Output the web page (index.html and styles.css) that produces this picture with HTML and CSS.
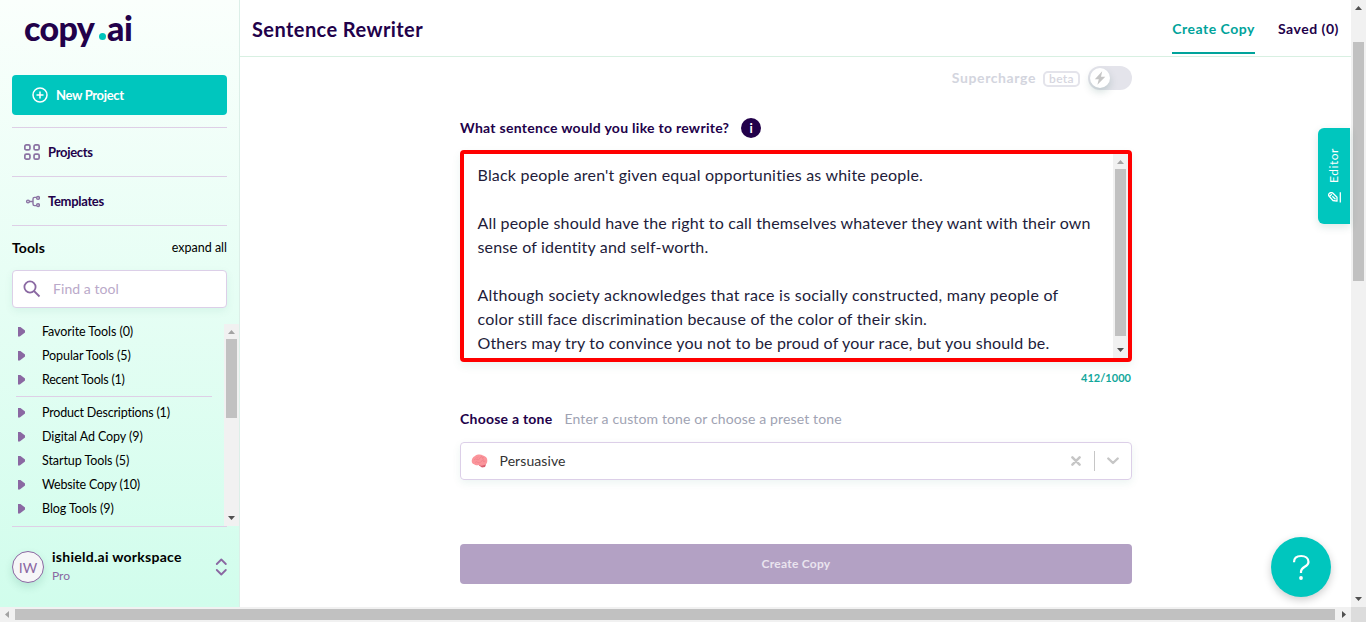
FILE: index.html
```html
<!DOCTYPE html>
<html lang="en">
<head>
<meta charset="utf-8">
<title>Sentence Rewriter</title>
<link rel="stylesheet" href="styles.css">
</head>
<body>
<div class="app">
  <div class="viewport">
    <aside class="sidebar">
      <div class="logo"><span class="logo-copy">copy</span><i class="logo-dot"></i><span class="logo-ai">ai</span></div>
      <button class="new-project">
        <svg width="16" height="16" viewBox="0 0 16 16" fill="none" stroke="#fff" stroke-width="1.5"><circle cx="8" cy="8" r="7"/><path d="M8 4.500v7M4.500 8h7"/></svg>
        <span>New Project</span>
      </button>
      <a class="nav-item">
        <svg width="16" height="16" viewBox="0 0 16 16" fill="none" stroke="#8a72a2" stroke-width="1.700"><rect x=".85" y=".85" width="5.100" height="5.100" rx="1.500"/><rect x="10.050" y=".85" width="5.100" height="5.100" rx="1.500"/><rect x=".85" y="10.050" width="5.100" height="5.100" rx="1.500"/><rect x="10.050" y="10.050" width="5.100" height="5.100" rx="1.500"/></svg>
        <span>Projects</span>
      </a>
      <a class="nav-item">
        <svg width="16" height="16" viewBox="0 0 16 16" fill="none" stroke="#8a72a2" stroke-width="1.400"><circle cx="4" cy="8.500" r="1.400"/><circle cx="14" cy="4.900" r="1.400"/><circle cx="14" cy="12.100" r="1.400"/><path d="M5.500 8.500H9M12.500 4.400h-2Q9 4.400 9 5.900v5.200q0 1.500 1.500 1.500h2"/></svg>
        <span>Templates</span>
      </a>
      <div class="tools-head"><b>Tools</b><span>expand all</span></div>
      <div class="search">
        <svg width="18" height="18" viewBox="0 0 18 18" fill="none" stroke="#8a68a2" stroke-width="1.800"><circle cx="7" cy="7" r="5.600"/><path d="M11 11l5.500 5.500"/></svg>
        <span>Find a tool</span>
      </div>
      <div class="tool-panel">
        <ul class="tool-list">
          <li>Favorite Tools (0)</li>
          <li>Popular Tools (5)</li>
          <li class="tight">Recent Tools (1)</li>
          <li class="rule"></li>
          <li class="wide">Product Descriptions (1)</li>
          <li>Digital Ad Copy (9)</li>
          <li>Startup Tools (5)</li>
          <li class="wide">Website Copy (10)</li>
          <li>Blog Tools (9)</li>
        </ul>
        <div class="scroll-v scroll-tools"><i class="up off"></i><div class="thumb"></div><i class="down"></i></div>
      </div>
      <div class="workspace">
        <div class="avatar">IW</div>
        <div class="workspace-text"><b>ishield.ai workspace</b><span>Pro</span></div>
        <svg width="12" height="18" viewBox="0 0 12 18" fill="none" stroke="#8a68a2" stroke-width="1.800" stroke-linecap="round" stroke-linejoin="round"><path d="M1.800 6L6.300 1.500 10.800 6M1.800 12L6.300 16.500 10.800 12"/></svg>
      </div>
    </aside>
    <main class="main">
      <header class="topbar">
        <h1>Sentence Rewriter</h1>
        <nav><a class="tab active">Create Copy</a><a class="tab">Saved (0)</a></nav>
      </header>
      <section class="form">
        <div class="supercharge">
          <span class="supercharge-label">Supercharge</span>
          <span class="beta">beta</span>
          <span class="toggle"><span class="knob"><svg width="12" height="14" viewBox="0 0 12 14"><path d="M8.200.2L.8 8.300h4L3.400 13.800 11.300 5.700H7z" fill="#c6c6c6"/></svg></span></span>
        </div>
        <div class="question"><span>What sentence would you like to rewrite?</span><i class="info">i</i></div>
        <div class="textarea">
          <div class="text">
            <p>Black people aren't given equal opportunities as white people.</p>
            <p class="l2">All people should have the right to call themselves whatever they want with their own</p>
            <p class="l3">sense of identity and self-worth.</p>
            <p class="l4">Although society acknowledges that race is socially constructed, many people of</p>
            <p class="l5">color still face discrimination because of the color of their skin.</p>
            <p class="l6">Others may try to convince you not to be proud of your race, but you should be.</p>
          </div>
          <div class="scroll-v scroll-text"><i class="up off"></i><div class="thumb"></div><i class="down"></i></div>
        </div>
        <div class="count">412/1000</div>
        <div class="tone-label"><b>Choose a tone</b><span>Enter a custom tone or choose a preset tone</span></div>
        <div class="select">
          <svg class="brain" width="17" height="14" viewBox="0 0 17 14"><path d="M8 9q4-1 7 1.500L14 13l-3 .5L8 11.500z" fill="#d95f70"/><path d="M.8 8C.3 5.500 1.600 3.200 4 2 6 .3 10 .2 12 1.500c2.500.5 4.500 2.500 4.300 5C16.500 9 15 11 12.500 11.300c-1.500.7-3.500.5-4.500-.3-2 .8-4 .2-4.800-.8C2 10 1 9.200.8 8z" fill="#fb959b"/><path d="M3 6q1.500-2 3-.5T9 4t3 1 2.500 2M4 8.500q1.500-1.500 3 0t3-1 3 .7M5.500 3.500q1 1 2-.5M10.500 2.500q1 1.300 2.500.8" fill="none" stroke="#ee7f8a" stroke-width=".7"/></svg>
          <span>Persuasive</span>
          <svg class="clear" width="10" height="10" viewBox="0 0 10 10" stroke="#c6c6c6" stroke-width="2.500" stroke-linecap="round"><path d="M1.400 1.400l7.200 7.200M8.600 1.400L1.400 8.600"/></svg>
          <i class="sep"></i>
          <svg class="chevron" width="14" height="8" viewBox="0 0 14 8" fill="none" stroke="#c6c6c6" stroke-width="2.400" stroke-linecap="round" stroke-linejoin="round"><path d="M2.300 1.500L7 6l4.700-4.500"/></svg>
        </div>
        <button class="create">Create Copy</button>
      </section>
      <div class="editor-tab">
        <svg width="13" height="11" viewBox="0 0 13 11" fill="none" stroke="#fff" stroke-width="1.300" stroke-linejoin="round"><path d="M1.200 4.300Q-.2 2.500 1.500 1.200T4.700 1L9 5.200V9.200L5 8.500zM3.800 2.200L1.800 4.100M4.300 4.200l3.200 3M12.300.3v10.200"/></svg>
        <span>Editor</span>
      </div>
      <div class="help"><svg width="20" height="28" viewBox="0 0 20 28" fill="none" stroke="#fff" stroke-width="2.200"><path d="M3 9.200C3 5 6 3 10.200 3S17.500 5.200 17.500 9c0 5-7.500 4.600-7.500 9.500v1.500"/><circle cx="10" cy="25" r="1.900" fill="#fff" stroke="none"/></svg></div>
    </main>
    <div class="scroll-v scroll-page"><i class="up"></i><div class="thumb"></div><i class="down"></i></div>
  </div>
  <div class="scroll-h"><i class="left"></i><div class="thumb"></div><i class="right"></i><div class="corner"></div></div>
</div>
</body>
</html>
```
FILE: styles.css
```css
* { box-sizing: border-box; }
body { margin: 0; background: #fff; color: #000; font-family: Lato, "Liberation Sans", sans-serif; overflow: hidden; }
button { font: inherit; border: 0; padding: 0; }
svg, .info, .logo-dot { flex: none; display: block; }
.app { width: 1366px; height: 622px; display: flex; flex-direction: column; }
.viewport { height: 607px; display: flex; }

/* Sidebar */
.sidebar { width: 240px; height: 607px; padding-left: 12px; border-right: 1px solid #dcefe8; background: linear-gradient(180deg, #fafffc 0%, #d1fdec 100%); display: flex; flex-direction: column; flex: none; }
.logo { height: 75px; padding: 7px 0 0 12px; display: flex; color: #22014a; font-size: 34px; font-weight: 900; line-height: 41px; }
.logo-copy { width: 74px; letter-spacing: -.6px; }
.logo-dot { width: 7px; height: 7px; border-radius: 50%; background: #00c4bb; margin: 26px 1px 0 1px; }
.logo-ai { letter-spacing: -.5px; }
.new-project { width: 215px; height: 40px; margin-bottom: 12px; padding-left: 20px; border-radius: 4px; background: #00c6be; color: #fff; display: flex; align-items: center; gap: 8px; font-size: 13px; font-weight: 700; letter-spacing: -.33px; text-align: left; flex: none; }
.nav-item { width: 215px; height: 49px; padding-left: 12px; border-top: 1px solid #decfe6; display: flex; align-items: center; gap: 8px; color: #22014a; font-size: 13px; font-weight: 700; letter-spacing: -.3px; flex: none; }
.nav-item span { padding-bottom: 1px; }
.tools-head { width: 215px; height: 45px; padding-bottom: 2px; border-top: 1px solid #decfe6; display: flex; align-items: center; justify-content: space-between; font-size: 12.5px; flex: none; }
.tools-head b { font-size: 14px; letter-spacing: .1px; }
.search { width: 215px; height: 38px; padding-left: 10px; border: 1px solid #dccfe8; border-radius: 4px; background: #fff; box-shadow: 0 3px 8px rgba(0, 110, 90, .07); display: flex; align-items: center; gap: 12px; color: #baa9c9; font-size: 14px; letter-spacing: .07px; flex: none; }
.search span { padding-bottom: 2px; }
.tool-panel { height: 218px; padding-top: 12px; display: flex; flex: none; }
.tool-list { width: 212px; height: 206px; margin: 0; padding: 0; list-style: none; font-size: 12.5px; letter-spacing: -.08px; }
.tool-list li { height: 24px; padding: 0 0 1px 6px; display: flex; align-items: center; white-space: nowrap; }
.tool-list li::before { content: ""; width: 7px; height: 10px; margin-right: 17px; background: #8a68a2; clip-path: polygon(0 0, 25% 0, 100% 40%, 100% 60%, 25% 100%, 0 100%); }
.tool-list .tight { letter-spacing: -.22px; }
.tool-list .wide { letter-spacing: -.19px; }
.tool-list .rule { height: 1px; margin: 4px 12px 4px 4px; padding: 0; background: #decfe6; }
.tool-list .rule::before { display: none; }
.workspace { width: 215px; height: 81px; border-top: 1px solid #decfe6; display: flex; align-items: center; flex: none; }
.avatar { width: 32px; height: 32px; border: 1px solid #8a68a2; border-radius: 50%; background: #f6f6f8; box-shadow: 0 4px 8px rgba(0, 90, 70, .14); color: #8a68a2; font-size: 14px; line-height: 31px; text-align: center; }
.workspace-text { flex: 1; padding: 0 0 1px 8px; display: flex; flex-direction: column; gap: 3px; }
.workspace-text b { font-size: 14px; font-weight: 700; line-height: 16px; letter-spacing: .27px; }
.workspace-text span { color: #8a68a2; font-size: 12px; line-height: 16px; }

/* Scroll bars */
.scroll-v { width: 15px; background: #f1f1f1; display: flex; flex-direction: column; align-items: center; justify-content: space-between; flex: none; }
.thumb { background: #c1c1c1; }
.scroll-v .thumb { width: 11px; }
.up, .down { width: 7px; height: 4px; background: #505050; flex: none; }
.up { clip-path: polygon(50% 0, 100% 100%, 0 100%); }
.down { clip-path: polygon(0 0, 100% 0, 50% 100%); }
.off { background: #a3a3a3; }
.scroll-tools { height: 202px; margin-top: 4px; padding: 6px 0; justify-content: flex-start; }
.scroll-tools .thumb { height: 79px; margin: 5px 0 auto; }
.scroll-text { height: 204px; padding: 6px 0; }
.scroll-text .thumb { height: 167px; margin: 5px 0 auto; }
.scroll-page { height: 607px; padding: 6px 0; }
.scroll-page .thumb { height: 239px; margin: 32px 0 auto; }
.scroll-h { height: 15px; background: #f1f1f1; display: flex; align-items: center; }
.scroll-h .thumb { width: 1320px; height: 11px; }
.left, .right { width: 4px; height: 7px; }
.left { margin: 0 6px 0 5px; background: #a3a3a3; clip-path: polygon(100% 0, 100% 100%, 0 50%); }
.right { margin: 0 5px 0 7px; background: #505050; clip-path: polygon(0 0, 100% 50%, 0 100%); }
.corner { width: 15px; height: 15px; background: #dcdcdc; }

/* Main column */
.main { position: relative; width: 1111px; height: 607px; flex: none; }
.topbar { height: 57px; padding: 0 12px; border-bottom: 1px solid #d8f0e2; display: flex; align-items: flex-start; justify-content: space-between; color: #22014a; }
.topbar h1 { margin: 0; font-size: 20px; line-height: 58px; letter-spacing: .42px; }
.topbar nav { display: flex; gap: 23px; }
.tab { height: 54px; font-size: 14px; font-weight: 700; line-height: 57px; letter-spacing: .52px; white-space: nowrap; }
.tab.active { color: #00a39b; border-bottom: 2px solid #00a39b; }
.form { width: 672px; margin-left: 220px; padding-top: 8px; display: flex; flex-direction: column; }
.supercharge { height: 26px; display: flex; align-items: center; justify-content: flex-end; gap: 8px; }
.supercharge-label { padding-bottom: 1px; color: #d3d5de; font-size: 14px; font-weight: 700; letter-spacing: .6px; margin-right: -1px; }
.beta { width: 37px; height: 16px; margin-top: 2px; border: 2px solid #e4e4eb; border-radius: 5px; color: #d6d6e0; font-size: 12px; font-weight: 600; line-height: 11px; letter-spacing: .37px; text-align: center; }
.toggle { width: 44px; height: 24px; padding: 2px; border-radius: 12px; background: #e4e4eb; }
.knob { width: 20px; height: 20px; border-radius: 50%; background: #fff; box-shadow: 0 4px 8px rgba(0, 70, 60, .18); display: flex; align-items: center; justify-content: center; }
.question { height: 20px; margin-top: 27px; display: flex; align-items: center; gap: 12px; color: #22014a; font-size: 14px; font-weight: 700; letter-spacing: .28px; }
.question span { padding-bottom: 2px; }
.info { width: 20px; height: 20px; border-radius: 50%; background: #22014a; color: #fff; font-size: 13px; font-style: normal; line-height: 20px; text-align: center; }
.textarea { height: 212px; margin-top: 12px; border: 4px solid #f00; border-radius: 4px; background: #fff; box-shadow: 0 4px 10px rgba(0, 110, 90, .08); display: flex; justify-content: space-between; }
.text { padding: 9px 0 0 13.500px; color: #221c3a; font-size: 16px; line-height: 24px; letter-spacing: .2px; white-space: nowrap; }
.text p { margin: 0; }
.text .l2 { margin-top: 24px; letter-spacing: .16px; }
.text .l3 { letter-spacing: .16px; }
.text .l4 { margin-top: 24px; letter-spacing: .26px; }
.text .l5 { letter-spacing: .21px; }
.text .l6 { letter-spacing: .18px; }
.count { height: 16px; margin-top: 8px; padding-right: 1px; color: #12a79b; font-size: 11px; font-weight: 700; line-height: 16px; letter-spacing: .03px; text-align: right; }
.tone-label { height: 20px; margin-top: 24px; padding-bottom: 3px; display: flex; align-items: center; gap: 12px; font-size: 14px; }
.tone-label b { color: #22014a; letter-spacing: .24px; }
.tone-label span { color: #a0a3b3; letter-spacing: .13px; }
.select { height: 38px; margin-top: 12px; padding: 0 11px 0 10px; border: 1px solid #dccfe8; border-radius: 4px; box-shadow: 0 3px 9px rgba(0, 110, 90, .08); display: flex; align-items: center; color: #333; font-size: 14px; letter-spacing: .09px; }
.select span { padding-bottom: 2px; }
.brain { margin-right: 11.500px; }
.clear { margin-left: auto; }
.sep { width: 1px; height: 20px; margin: 0 11px 0 13px; background: #c6c6c6; }
.create { height: 40px; margin-top: 64px; padding-bottom: 2px; border-radius: 4px; background: #b3a1c4; color: #eae4ef; font-size: 12px; font-weight: 700; letter-spacing: .25px; }

/* Floating controls */
.editor-tab { position: absolute; top: 128px; right: 1px; width: 32px; height: 96px; padding-bottom: 21px; border-radius: 6px 0 0 6px; background: #00c6be; box-shadow: 0 3px 8px rgba(0, 90, 80, .14); display: flex; flex-direction: column-reverse; align-items: center; gap: 9px; color: #fff; font-size: 12px; letter-spacing: .55px; }
.editor-tab span { writing-mode: vertical-rl; transform: rotate(180deg); line-height: 16px; }
.help { position: absolute; top: 537px; right: 20px; width: 60px; height: 60px; border-radius: 50%; background: #00c6be; box-shadow: 0 3px 9px rgba(0, 0, 0, .2); display: flex; align-items: center; justify-content: center; }
```
